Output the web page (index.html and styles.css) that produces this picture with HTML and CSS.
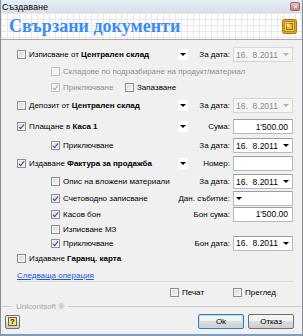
FILE: index.html
```html
<!doctype html>
<html lang="bg">
  <head>
    <meta charset="UTF-8" />
    <title>Създаване</title>
    <link rel="stylesheet" href="styles.css">
  </head>
  <body>
    <div class="window">
      <div class="titlebar">
        <span>Създаване</span>
        <span class="close">✕</span>
      </div>

      <header class="banner">
        <h1>Свързани документи</h1>
        <svg class="logo" width="15" height="15" viewBox="0 0 15 15">
          <rect x="0.5" y="0.5" width="14" height="14" rx="2" fill="#e3a91c" stroke="#a8760c" />
          <rect x="2.5" y="2.5" width="10" height="10" fill="#f7d264" stroke="#b98410" />
          <rect x="4.5" y="4.5" width="6" height="6" fill="#eab83a" stroke="#9c6b06" />
          <rect x="4.5" y="4.5" width="3" height="3" fill="#fbe7a0" />
        </svg>
      </header>

      <main class="form">
        <label class="left"><span class="cb"></span>Изписване от&nbsp;<b>Централен склад</b></label>
        <span class="drop"></span>
        <span class="lbl">За дата:</span>
        <span class="field date disabled">16.&nbsp; 8.2011</span>

        <label class="left indent muted"><span class="cb off"></span>Складове по подразбиране на продукт/материал</label>

        <div class="left indent pair">
          <label class="muted"><span class="cb off on"></span>Приключване</label>
          <label><span class="cb"></span>Запазване</label>
        </div>

        <label class="left"><span class="cb"></span>Депозит от&nbsp;<b>Централен склад</b></label>
        <span class="drop"></span>
        <span class="lbl">За дата:</span>
        <span class="field date disabled">16.&nbsp; 8.2011</span>

        <label class="left"><span class="cb on"></span>Плащане в&nbsp;<b>Каса 1</b></label>
        <span class="drop"></span>
        <span class="lbl">Сума:</span>
        <span class="field num">1'500.00</span>

        <label class="left indent"><span class="cb on"></span>Приключване</label>
        <span class="lbl">За дата:</span>
        <span class="field date">16.&nbsp; 8.2011</span>

        <label class="left"><span class="cb on"></span>Издаване&nbsp;<b>Фактура за продажба</b></label>
        <span class="drop"></span>
        <span class="lbl">Номер:</span>
        <span class="field"></span>

        <label class="left indent"><span class="cb"></span>Опис на вложени материали</label>
        <span class="lbl">За дата:</span>
        <span class="field date">16.&nbsp; 8.2011</span>

        <label class="left indent"><span class="cb on"></span>Счетоводно записване</label>
        <span class="lbl wide">Дан. събитие:</span>
        <span class="field date"></span>

        <label class="left indent"><span class="cb on"></span>Касов бон</label>
        <span class="lbl wide">Бон сума:</span>
        <span class="field num">1'500.00</span>

        <label class="left indent"><span class="cb"></span>Изписване МЗ</label>

        <label class="left indent"><span class="cb on"></span>Приключване</label>
        <span class="lbl wide">Бон дата:</span>
        <span class="field date">16.&nbsp; 8.2011</span>

        <label class="left"><span class="cb"></span>Издаване&nbsp;<b>Гаранц. карта</b></label>
      </main>

      <div class="next"><a href="#">Следваща операция</a></div>

      <div class="options">
        <label class="print"><span class="cb"></span>Печат</label>
        <label><span class="cb"></span>Преглед</label>
      </div>

      <div class="credit"><span>Unicontsoft ®</span></div>

      <footer class="actions">
        <button type="button" class="help"><span>?</span></button>
        <div class="buttons">
          <button type="button" class="default">Ok</button>
          <button type="button">Отказ</button>
        </div>
      </footer>
    </div>
  </body>
</html>
```

FILE: styles.css
```css
* {
    box-sizing: border-box;
    margin: 0;
    padding: 0;
}

body {
    font-family: "Liberation Sans", Arial, sans-serif;
    font-size: 8px;
    color: #000;
    background: #f0f0f0;
}

.window {
    width: 303px;
    height: 336px;
    display: flex;
    flex-direction: column;
    background: #f0f0f0;
    border-left: 1px solid #8a8f96;
    border-right: 1px solid #8a8f96;
    border-bottom: 2px solid #7c9cc2;
    overflow: hidden;
}

.titlebar {
    height: 13px;
    flex: none;
    display: flex;
    align-items: center;
    justify-content: space-between;
    padding: 0 2px 0 1px;
    background: linear-gradient(#e7edf4, #d6dfe9);
    font-size: 9px;
}

.close {
    width: 10px;
    height: 9px;
    display: flex;
    align-items: center;
    justify-content: center;
    border: 1px solid #9a6a6a;
    border-radius: 2px;
    background: linear-gradient(#e9c2bd, #c97c72);
    color: #fff;
    font-size: 6px;
    line-height: 1;
}

.banner {
    height: 27px;
    flex: none;
    display: flex;
    align-items: center;
    justify-content: space-between;
    padding: 1px 5px 0 8px;
    border-bottom: 1px solid #a9a9a9;
    background-color: #fff;
    background-image:
        linear-gradient(90deg, #e8e8e8 1px, transparent 1px),
        linear-gradient(#e8e8e8 1px, transparent 1px);
    background-size: 6px 6px;
}

h1 {
    font-family: "Liberation Serif", "Times New Roman", serif;
    font-size: 18px;
    font-weight: bold;
    color: #3a8cf3;
}

.form {
    display: grid;
    grid-template-columns: minmax(0, 1fr) 12px 45px 60px;
    grid-template-rows: 17px 17px 15px 21px 21px 17px 18px 19px 15px 16px 14px 14px 17px;
    align-items: center;
    padding: 6px 9px 0 16px;
}

.left {
    grid-column: 1;
    display: flex;
    align-items: center;
    white-space: nowrap;
}

.indent {
    padding-left: 34px;
}

.pair label {
    display: flex;
    align-items: center;
    flex: none;
    width: 74px;
}

.muted {
    color: #8f8f8f;
}

.pair .muted + label {
    color: #000;
}

.cb {
    width: 9px;
    height: 9px;
    flex: none;
    margin-right: 3px;
    border: 1px solid #8e8f8f;
    background: linear-gradient(135deg, #d6d6d6, #f7f7f7);
    box-shadow: inset 0 0 0 1px #f4f4f4;
    position: relative;
}

.cb.on::after {
    content: "";
    position: absolute;
    left: 2px;
    top: 0;
    width: 2px;
    height: 5px;
    border-right: 1.4px solid #304c9c;
    border-bottom: 1.4px solid #304c9c;
    transform: rotate(40deg);
}

.cb.off {
    border-color: #c2c2c2;
    background: #f4f4f4;
}

.cb.off.on::after {
    border-color: #a9a9a9;
}

.drop {
    grid-column: 2;
    justify-self: end;
    width: 10px;
    height: 11px;
    background: #fff;
    display: flex;
    align-items: center;
    justify-content: center;
}

.drop::after,
.date::after {
    content: "";
    border-left: 3px solid transparent;
    border-right: 3px solid transparent;
    border-top: 3px solid #000;
}

.lbl {
    grid-column: 3;
    text-align: right;
    padding-right: 3px;
    white-space: nowrap;
}

.lbl.wide {
    grid-column: 2 / 4;
}

.field {
    grid-column: 4;
    height: 15px;
    display: flex;
    align-items: center;
    padding: 0 2px;
    border: 1px solid #b5b9c0;
    border-top-color: #9a9ea6;
    background: #fff;
    font-size: 8.5px;
    white-space: nowrap;
}

.date {
    justify-content: space-between;
    padding-right: 3px;
}

.date.disabled {
    background: #f5f5f5;
    border-color: #d6d6d6;
    color: #8a8a8a;
}

.date.disabled::after {
    border-top-color: #b0b0b0;
}

.num {
    justify-content: flex-end;
    padding-right: 4px;
}

.next {
    height: 15px;
    flex: none;
    display: flex;
    align-items: flex-end;
    margin: 0 9px 0 16px;
    border-bottom: 1px solid #d9d9d9;
}

.next a {
    color: #1b57e0;
    line-height: 10px;
}

.options {
    height: 20px;
    flex: none;
    display: flex;
    align-items: center;
    padding-left: 169px;
}

.options label {
    display: flex;
    align-items: center;
}

.options .print {
    width: 63px;
}

.credit {
    height: 9px;
    flex: none;
    display: flex;
    align-items: center;
    gap: 4px;
    color: #a6a6a6;
}

.credit::before,
.credit::after {
    content: "";
    height: 1px;
    background: #cfcfcf;
}

.credit::before {
    width: 11px;
}

.credit::after {
    flex: 1;
}

.actions {
    flex: 1;
    display: flex;
    align-items: center;
    justify-content: space-between;
    padding: 0 8px 2px 4px;
}

.buttons {
    display: flex;
    gap: 4px;
}

button {
    height: 15px;
    width: 46px;
    font-family: inherit;
    font-size: 8px;
    border: 1px solid #707070;
    border-radius: 2px;
    background: linear-gradient(#f3f3f3 45%, #dcdcdc 50%, #cfcfcf);
    color: #000;
}

button.default {
    border-color: #3b7cb0;
    box-shadow: inset 0 0 0 1px #b6e0f6;
}

.help {
    width: 15px;
    height: 14px;
    display: flex;
    align-items: center;
    justify-content: center;
}

.help span {
    width: 9px;
    height: 9px;
    display: flex;
    align-items: center;
    justify-content: center;
    border: 1px solid #6a6a3a;
    background: #f3e27a;
    font-size: 7px;
    font-weight: bold;
    line-height: 1;
}
```
